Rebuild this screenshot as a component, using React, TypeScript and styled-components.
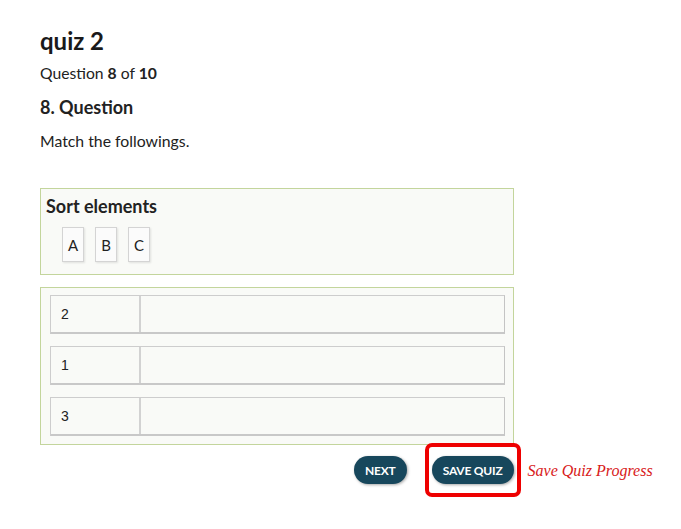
import styled, { createGlobalStyle } from "styled-components";

const GlobalStyle = createGlobalStyle`
	body {
		margin: 0;
		background: #ffffff;
		font-family: Lato, "Open Sans", sans-serif;
		color: #222222;
	}
`;

const Page = styled.div`
	width: 681px;
	height: 529px;
	padding: 25px 0 0 40px;
	box-sizing: border-box;
`;

const Title = styled.h1`
	margin: 0;
	font-size: 24px;
	font-weight: 700;
	line-height: 32px;
	color: #1a1a1a;
`;

const Counter = styled.p`
	margin: 5px 0 0;
	font-size: 15.7px;
	line-height: 22px;
`;

const QuestionTitle = styled.h2`
	margin: 11px 0 0;
	font-size: 18px;
	font-weight: 700;
	line-height: 24px;
`;

const Prompt = styled.p`
	margin: 11px 0 0;
	font-size: 15.8px;
	line-height: 22px;
`;

const Panel = styled.div<{ top: number }>`
	width: 474px;
	box-sizing: border-box;
	margin-top: ${(p) => p.top}px;
	background: #f9faf7;
	border: 1px solid #c3d59c;
`;

const SortPanel = styled(Panel)`
	height: 87px;
	padding: 5px 5px 0;
`;

const SortTitle = styled.h3`
	margin: 0;
	font-size: 18px;
	font-weight: 700;
	line-height: 24px;
`;

const Chips = styled.div`
	display: flex;
	gap: 11px;
	margin: 9px 0 0 16px;
`;

const Chip = styled.div`
	width: 22px;
	height: 35px;
	box-sizing: border-box;
	display: flex;
	align-items: center;
	justify-content: center;
	background: #fbfbfb;
	border: 1px solid #d4d4d4;
	box-shadow: 1px 1px 2px rgba(0, 0, 0, 0.1);
	font-size: 15px;
	color: #222;
`;

const MatchPanel = styled(Panel)`
	height: 158px;
	padding: 7px 8px 0 9px;
	display: flex;
	flex-direction: column;
	gap: 12px;
`;

const Row = styled.div`
	display: flex;
	height: 39px;
	box-sizing: border-box;
	border: 1px solid #cdcdcd;
	border-right-color: #c4c4c4;
	border-bottom: 2px solid #c8c8c8;
	background: #f9faf7;
`;

const Key = styled.div`
	width: 90px;
	box-sizing: border-box;
	padding-left: 10px;
	display: flex;
	align-items: center;
	border-right: 2px solid #d2d2d2;
	font-family: "Liberation Sans", Arial, sans-serif;
	font-size: 14px;
	color: #222;
`;

const Slot = styled.div`
	flex: 1;
`;

const Actions = styled.div`
	display: flex;
	align-items: center;
	margin: -2px 0 0 314px;
	height: 54px;
`;

const Button = styled.button`
	height: 28px;
	padding: 0 11px;
	border: none;
	border-radius: 14px;
	background: #17475c;
	color: #ffffff;
	font-family: Lato, sans-serif;
	font-weight: 700;
	font-size: 12px;
	letter-spacing: -0.2px;
	box-shadow: 1px 1px 3px rgba(0, 0, 0, 0.35);
	cursor: pointer;
`;

const Highlight = styled.div`
	margin-left: 18px;
	width: 96px;
	height: 54px;
	box-sizing: border-box;
	border: 4px solid #ee0000;
	border-radius: 7px;
	display: flex;
	align-items: center;
	justify-content: center;
`;

const Note = styled.span`
	margin-left: 7px;
	margin-top: 2px;
	white-space: nowrap;
	color: #d81a1a;
	font-family: "Liberation Serif", "Times New Roman", cursive;
	font-style: italic;
	font-size: 16px;
`;

export default function App() {
	const rows = ["2", "1", "3"];
	return (
		<>
			<GlobalStyle />
			<Page>
				<Title>quiz 2</Title>
				<Counter>
					Question <b>8</b> of <b>10</b>
				</Counter>
				<QuestionTitle>8. Question</QuestionTitle>
				<Prompt>Match the followings.</Prompt>
				<SortPanel top={36}>
					<SortTitle>Sort elements</SortTitle>
					<Chips>
						{["A", "B", "C"].map((c) => (
							<Chip key={c}>{c}</Chip>
						))}
					</Chips>
				</SortPanel>
				<MatchPanel top={12}>
					{rows.map((r) => (
						<Row key={r}>
							<Key>{r}</Key>
							<Slot />
						</Row>
					))}
				</MatchPanel>
				<Actions>
					<Button>NEXT</Button>
					<Highlight>
						<Button>SAVE QUIZ</Button>
					</Highlight>
					<Note>Save Quiz Progress</Note>
				</Actions>
			</Page>
		</>
	);
}
